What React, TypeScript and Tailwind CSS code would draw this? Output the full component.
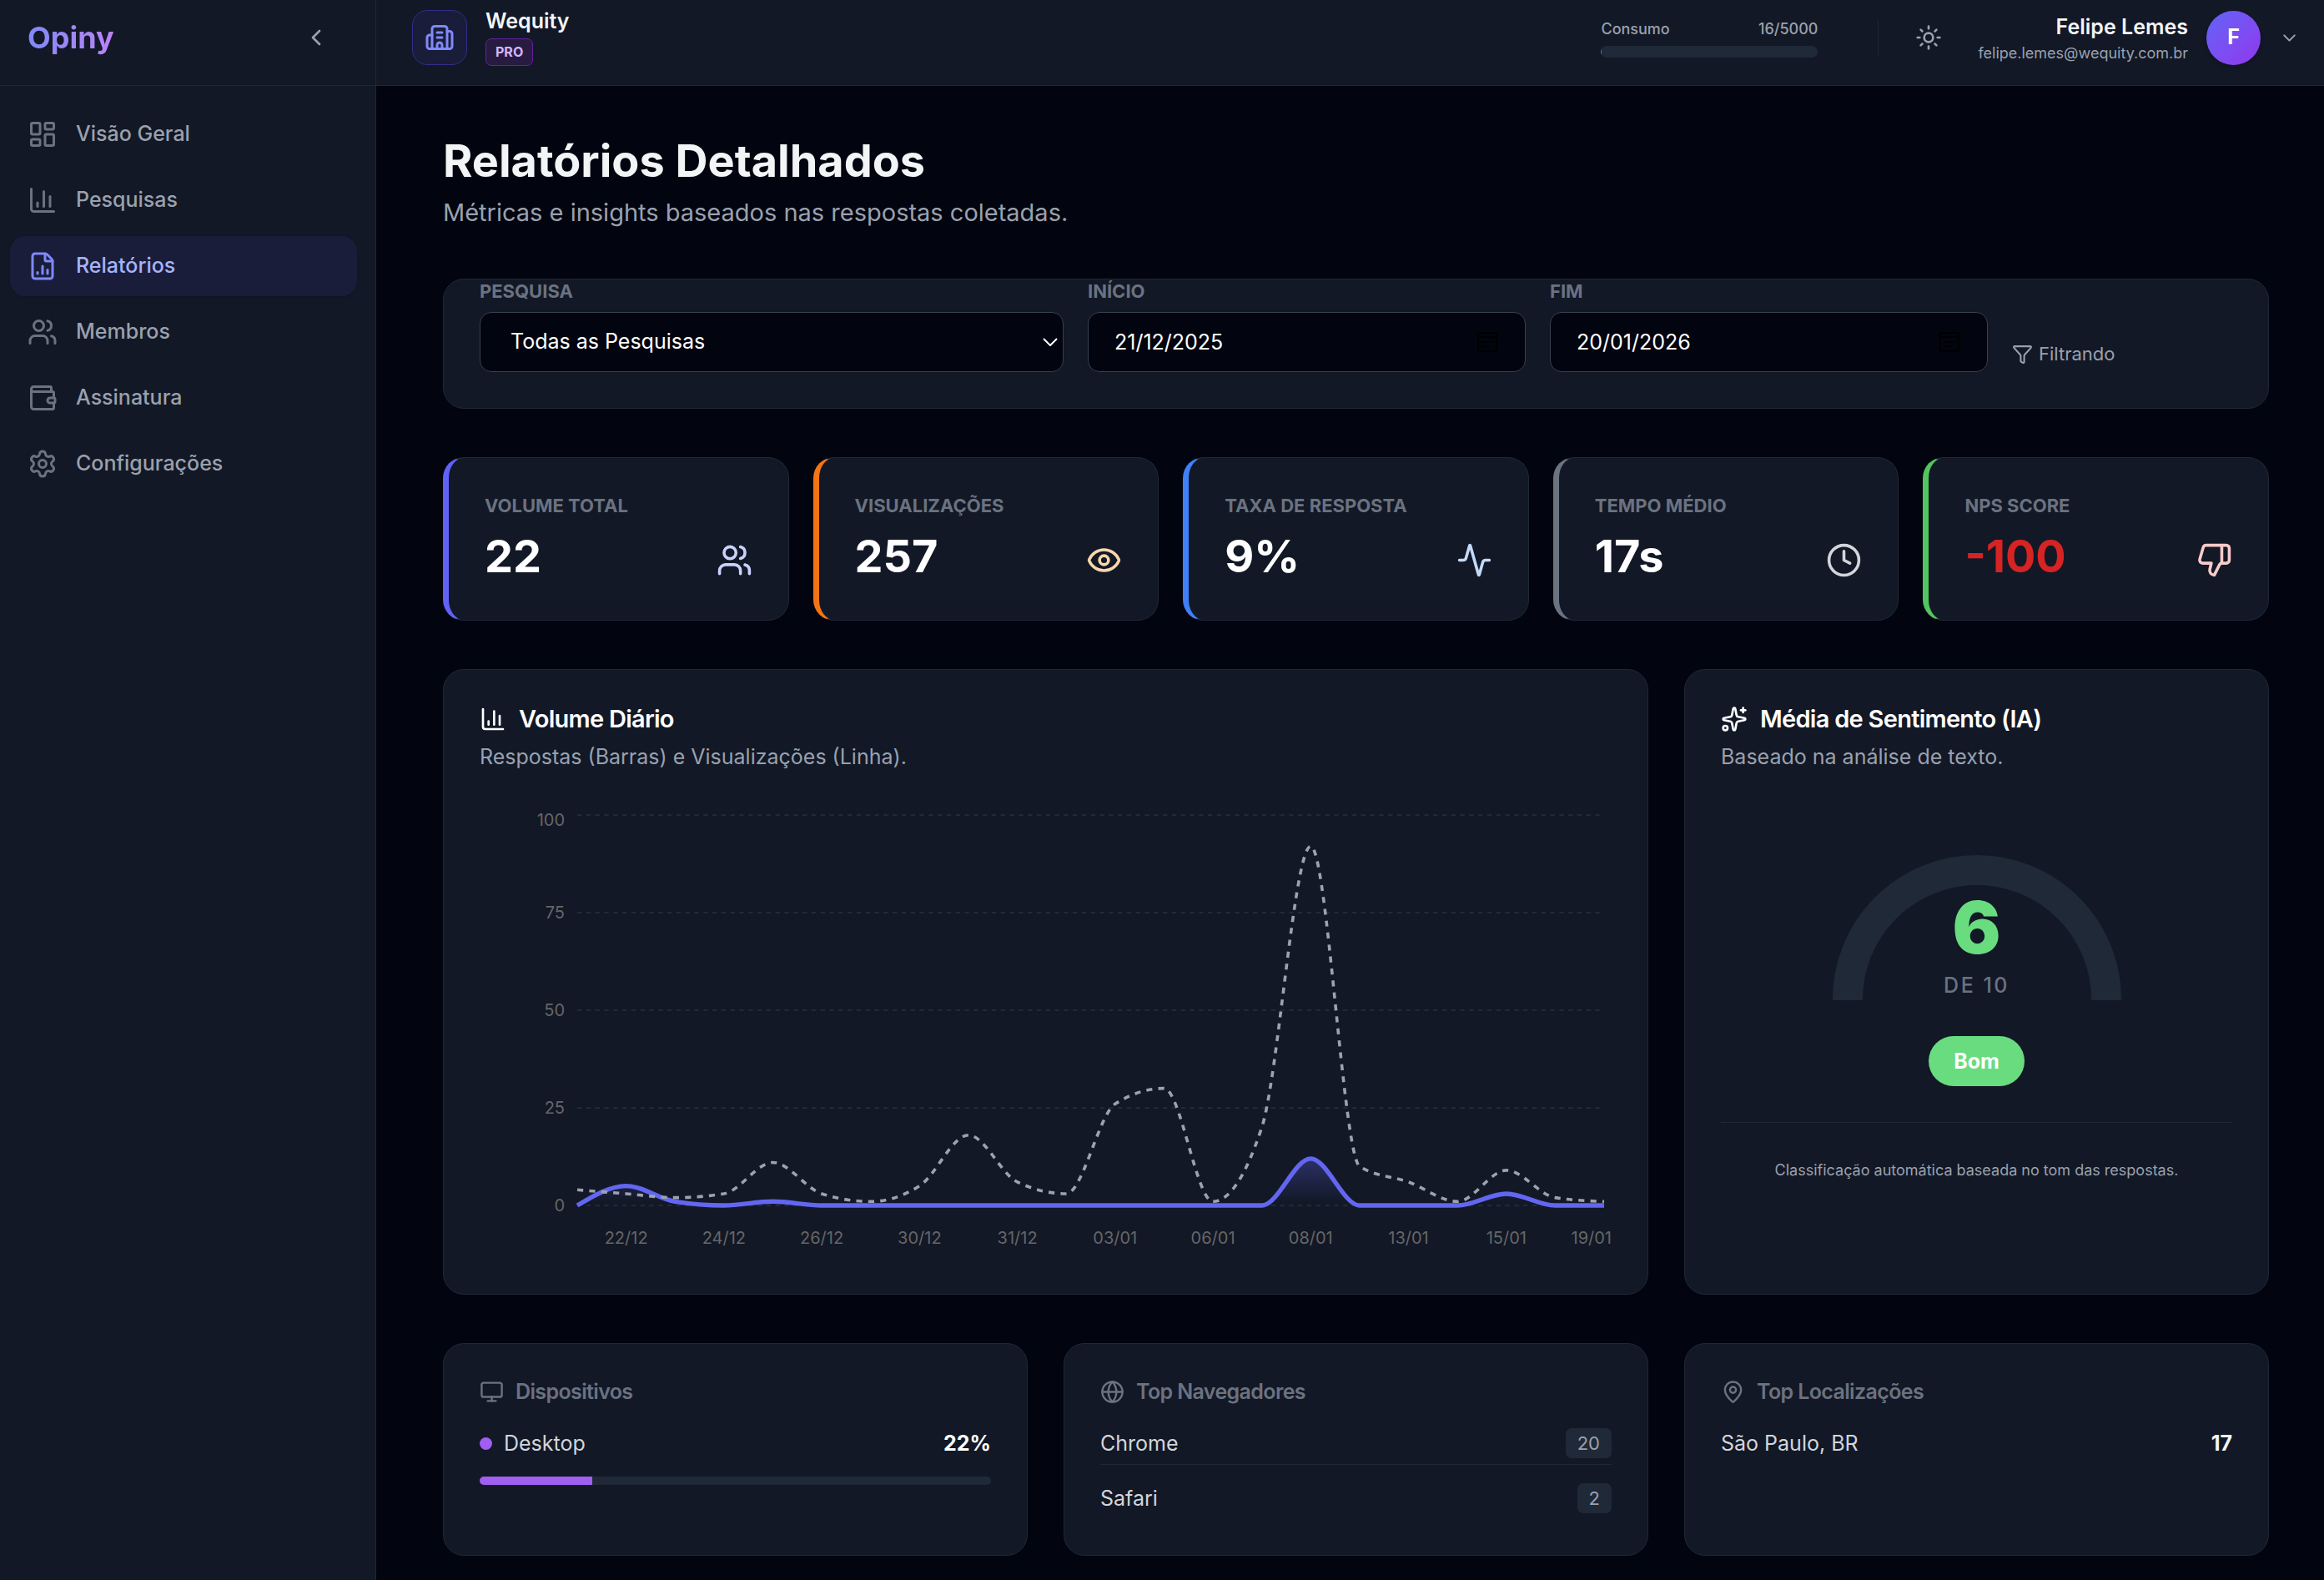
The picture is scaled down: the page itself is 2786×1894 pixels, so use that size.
import type { ReactNode } from "react";
import {
    Activity,
    Building2,
    ChartColumn,
    ChevronDown,
    ChevronLeft,
    Clock,
    Eye,
    FileChartColumn,
    Funnel,
    Globe,
    LayoutDashboard,
    MapPin,
    Monitor,
    Settings,
    Sparkles,
    Sun,
    ThumbsDown,
    Users,
    Wallet,
} from "lucide-react";

const navItems = [
    { label: "Visão Geral", icon: LayoutDashboard },
    { label: "Pesquisas", icon: ChartColumn },
    { label: "Relatórios", icon: FileChartColumn, active: true },
    { label: "Membros", icon: Users },
    { label: "Assinatura", icon: Wallet },
    { label: "Configurações", icon: Settings },
];

const stats = [
    { label: "Volume Total", value: "22", icon: Users, border: "border-l-[#6062f6]", color: "text-[#c8d2fb]", text: "text-white" },
    { label: "Visualizações", value: "257", icon: Eye, border: "border-l-[#f27415]", color: "text-[#f8d7ac]", text: "text-white" },
    { label: "Taxa de Resposta", value: "9%", icon: Activity, border: "border-l-[#3f80f6]", color: "text-[#c3daf9]", text: "text-white" },
    { label: "Tempo Médio", value: "17s", icon: Clock, border: "border-l-[#6b7280]", color: "text-[#d2d5db]", text: "text-white" },
    { label: "NPS Score", value: "-100", icon: ThumbsDown, border: "border-l-[#53c45f]", color: "text-[#f8cbca]", text: "text-[#d62323]" },
];

const views = [4, 3, 2, 3, 11, 3, 1, 5, 18, 6, 3, 26, 30, 1, 20, 92, 10, 6, 1, 9, 2, 1];
const answers = [0, 5, 1, 0, 1, 0, 0, 0, 0, 0, 0, 0, 0, 0, 0, 12, 0, 0, 0, 3, 0, 0];
const dayLabels = ["22/12", "24/12", "26/12", "30/12", "31/12", "03/01", "06/01", "08/01", "13/01", "15/01"];

const PLOT = { left: 117, right: 1348, top: 9, bottom: 477 };

const px = (i: number) => PLOT.left + (i * (PLOT.right - PLOT.left)) / (views.length - 1);
const py = (v: number) => PLOT.bottom - (v * (PLOT.bottom - PLOT.top)) / 100;

// Monotone cubic interpolation, so the line never overshoots its points
function monotonePath(values: number[]) {
    const pts = values.map((v, i) => ({ x: px(i), y: py(v) }));
    const h = pts[1].x - pts[0].x;
    const slopes = pts.slice(1).map((p, i) => (p.y - pts[i].y) / h);
    const tangents = pts.map((_, i) => {
        if (i === 0 || i === pts.length - 1) return 0;
        const a = slopes[i - 1];
        const b = slopes[i];
        return (Math.sign(a) + Math.sign(b)) * Math.min(Math.abs(a), Math.abs(b), 0.25 * Math.abs(a + b));
    });
    tangents[0] = (3 * slopes[0] - tangents[1]) / 2;
    tangents[pts.length - 1] = (3 * slopes[slopes.length - 1] - tangents[pts.length - 2]) / 2;

    let d = `M${pts[0].x},${pts[0].y}`;
    for (let i = 1; i < pts.length; i++) {
        const p = pts[i - 1];
        const q = pts[i];
        d += `C${p.x + h / 3},${p.y + (tangents[i - 1] * h) / 3},${q.x - h / 3},${q.y - (tangents[i] * h) / 3},${q.x},${q.y}`;
    }
    return d;
}

function Card({ className = "", children }: { className?: string; children: ReactNode }) {
    return (
        <section className={`rounded-[25px] border border-[#1f2836] bg-[#121826] ${className}`}>{children}</section>
    );
}

function Sidebar() {
    return (
        <aside className="w-[451px] shrink-0 border-r border-[#1f2836] bg-[#121826]">
            <div className="flex h-[103px] items-center justify-between border-b border-[#1f2836] pb-[12px] pl-[33px] pr-[55px]">
                <span className="bg-linear-to-r from-[#7f89f7] to-[#bb82f8] bg-clip-text text-[36px] font-bold text-transparent">
                    Opiny
                </span>
                <button type="button" aria-label="Recolher menu" className="text-[#9aa1ae]">
                    <ChevronLeft size={32} />
                </button>
            </div>
            <nav className="flex flex-col gap-[7px] pl-[12px] pr-[22px] pt-[22px]">
                {navItems.map(({ label, icon: Icon, active }) => (
                    <a
                        key={label}
                        href="#"
                        className={`flex h-[72px] items-center gap-[22px] rounded-[18px] px-[21px] text-[25px] font-medium ${
                            active ? "bg-[#191d3a] text-[#a7b3f9] shadow-sm" : "text-[#9aa1ae]"
                        }`}
                    >
                        <Icon size={36} className={active ? "text-[#7f89f7]" : "text-[#6b7280]"} />
                        {label}
                    </a>
                ))}
            </nav>
        </aside>
    );
}

function Header() {
    return (
        <header className="flex h-[103px] items-center justify-between border-b border-[#1f2836] bg-[#121826] pb-[12px] pl-[43px] pr-[29px]">
            <div className="flex items-center gap-[22px]">
                <div className="flex size-[66px] items-center justify-center rounded-[18px] border border-[#312f8a] bg-[#191d3a] text-[#7f89f7]">
                    <Building2 size={36} />
                </div>
                <div className="flex flex-col items-start gap-[6px]">
                    <span className="text-[25px] font-semibold leading-[29px] text-[#f3f4f6]">Wequity</span>
                    <span className="rounded-[7px] border border-[#65229f] bg-[#271b42] px-[11px] text-[16px] font-bold leading-[31px] text-[#d5b5fb]">
                        PRO
                    </span>
                </div>
            </div>

            <div className="flex items-center">
                <div className="flex w-[260px] flex-col gap-[7px]">
                    <div className="flex justify-between text-[18px] font-medium leading-[27px] text-[#9aa1ae]">
                        <span>Consumo</span>
                        <span>16/5000</span>
                    </div>
                    <div className="h-[14px] overflow-hidden rounded-full bg-[#202937]">
                        <div className="h-full bg-[#6062f6]" style={{ width: `${(16 / 5000) * 100}%` }} />
                    </div>
                </div>
                <div className="ml-[72px] h-[43px] w-px bg-[#1f2836]" />
                <button type="button" aria-label="Alternar tema" className="ml-[44px] text-[#9aa1ae]">
                    <Sun size={32} />
                </button>
                <button type="button" className="ml-[43px] flex items-center text-right">
                    <span className="flex flex-col">
                        <span className="text-[25px] font-semibold leading-[36px] text-[#f3f4f6]">Felipe Lemes</span>
                        <span className="text-[18px] leading-[27px] text-[#9aa1ae]">felipe.lemes@wequity.com.br</span>
                    </span>
                    <span className="ml-[22px] flex size-[65px] items-center justify-center rounded-full bg-linear-to-br from-[#6062f6] to-[#8f35ee] text-[25px] font-bold text-white shadow-md">
                        F
                    </span>
                    <ChevronDown size={25} className="ml-[22px] text-[#9aa1ae]" />
                </button>
            </div>
        </header>
    );
}

const fieldLabel = "text-[22px] font-bold uppercase leading-[29px] text-[#6b7280]";
const fieldBox =
    "h-[72px] w-full rounded-[14px] border border-[#374050] bg-[#02040f] text-[25px] text-white outline-none";

function DateField({ id, label, value }: { id: string; label: string; value: string }) {
    return (
        <div className="flex min-w-0 flex-3 flex-col gap-[10px]">
            <label htmlFor={id} className={fieldLabel}>
                {label}
            </label>
            <div className="relative">
                <input id={id} type="text" defaultValue={value} className={`${fieldBox} px-[31px]`} />
                <svg
                    viewBox="0 0 24 24"
                    fill="none"
                    stroke="#000"
                    strokeWidth="2"
                    className="pointer-events-none absolute right-[34px] top-[24px] size-[24px]"
                >
                    <rect x="1" y="1" width="22" height="22" rx="2" />
                    <path d="M1 6h22M6 12h3M11 12h3M16 12h3M6 17h3M11 17h3" />
                </svg>
            </div>
        </div>
    );
}

function Filters() {
    return (
        <Card className="mt-[58px] flex items-end gap-[29px] px-[43px] pb-[43px]">
            <div className="flex min-w-0 flex-4 flex-col gap-[10px]">
                <label htmlFor="survey" className={fieldLabel}>
                    Pesquisa
                </label>
                <div className="relative">
                    <select id="survey" className={`${fieldBox} appearance-none px-[36px]`}>
                        <option>Todas as Pesquisas</option>
                    </select>
                    <svg
                        viewBox="0 0 18 10"
                        fill="none"
                        stroke="#fff"
                        strokeWidth="2"
                        className="pointer-events-none absolute right-[7px] top-[31px] h-[10px] w-[18px]"
                    >
                        <path d="M1 1l8 8 8-8" />
                    </svg>
                </div>
            </div>
            <DateField id="start" label="Início" value="21/12/2025" />
            <DateField id="end" label="Fim" value="20/01/2026" />
            <div className="flex h-[43px] w-[264px] items-center gap-[7px] text-[22px] text-[#9aa1ae]">
                <Funnel size={25} />
                Filtrando
            </div>
        </Card>
    );
}

function VolumeChart() {
    const line = monotonePath(answers);

    return (
        <svg viewBox="0 0 1357 540" className="w-full" role="img" aria-label="Volume Diário">
            <defs>
                <linearGradient id="answersFill" x1="0" y1="0" x2="0" y2="1">
                    <stop offset="5%" stopColor="#6366f1" stopOpacity="0.3" />
                    <stop offset="95%" stopColor="#6366f1" stopOpacity="0" />
                </linearGradient>
            </defs>
            {[0, 25, 50, 75, 100].map((v) => (
                <g key={v}>
                    <line
                        x1={PLOT.left}
                        x2={PLOT.right}
                        y1={py(v)}
                        y2={py(v)}
                        stroke="#222938"
                        strokeWidth="2"
                        strokeDasharray="5.4 5.4"
                    />
                    <text x={102} y={py(v) + (v === 100 ? 13 : 7)} textAnchor="end" fill="#666" fontSize="20">
                        {v}
                    </text>
                </g>
            ))}
            {dayLabels.map((label, i) => (
                <text key={label} x={px(i * 2 + 1)} y={523} textAnchor="middle" fill="#666" fontSize="20">
                    {label}
                </text>
            ))}
            <text x={1357} y={523} textAnchor="end" fill="#666" fontSize="20">
                19/01
            </text>
            <path d={`${line}L${PLOT.right},${PLOT.bottom}L${PLOT.left},${PLOT.bottom}Z`} fill="url(#answersFill)" />
            <path d={line} fill="none" stroke="#6366f1" strokeWidth="5.4" />
            <path d={monotonePath(views)} fill="none" stroke="#9ca3af" strokeWidth="3.6" strokeDasharray="7.2 7.2" />
        </svg>
    );
}

function ChartHeading({ icon, title, subtitle }: { icon: ReactNode; title: string; subtitle: string }) {
    return (
        <div>
            <h2 className="flex items-center gap-[15px] text-[29px] font-semibold leading-[32px] tracking-tight text-white">
                {icon}
                {title}
            </h2>
            <p className="mt-[11px] text-[25px] leading-[36px] text-[#9aa1ae]">{subtitle}</p>
        </div>
    );
}

function Sentiment() {
    return (
        <Card className="p-[43px]">
            <ChartHeading icon={<Sparkles size={32} />} title="Média de Sentimento (IA)" subtitle="Baseado na análise de texto." />
            <div className="mt-[100px] flex flex-col items-center">
                <div className="relative w-[346px]">
                    <svg viewBox="0 0 346 174" className="w-full">
                        <path d="M18 174v-1a155 155 0 0 1 310 0v1" fill="none" stroke="#202937" strokeWidth="36" />
                    </svg>
                    <div className="absolute inset-x-0 bottom-0 flex flex-col items-center gap-[8px]">
                        <span className="text-[86px] font-black leading-[86px] text-[#68dc7f]">6</span>
                        <span className="text-[25px] font-medium uppercase leading-[36px] tracking-widest text-[#6b7280]">
                            de 10
                        </span>
                    </div>
                </div>
                <span className="mt-[43px] rounded-full bg-[#68dc7f] px-[30px] text-[25px] font-bold leading-[60px] text-white">
                    Bom
                </span>
            </div>
            <p className="mt-[43px] border-t border-[#1f2836] pt-[43px] text-center text-[18px] leading-[27px] text-[#9aa1ae]">
                Classificação automática baseada no tom das respostas.
            </p>
        </Card>
    );
}

function ListCard({ icon, title, children }: { icon: ReactNode; title: string; children: ReactNode }) {
    return (
        <Card className="p-[43px] pb-[50px] text-[25px]">
            <h2 className="mb-[29px] flex items-center gap-[14px] font-semibold leading-[29px] tracking-tight text-[#6b7280]">
                {icon}
                {title}
            </h2>
            {children}
        </Card>
    );
}

function BrowserRow({ name, count }: { name: string; count: number }) {
    return (
        <li className="flex items-center justify-between border-[#1f2836] leading-[36px] not-last:mb-[22px] not-last:border-b not-last:pb-[7px]">
            <span className="text-[#d2d5db]">{name}</span>
            <span className="rounded-[7px] bg-[#202937] px-[14px] text-[22px] text-[#9aa1ae]">{count}</span>
        </li>
    );
}

export default function App() {
    return (
        <div className="flex min-h-screen bg-[#02040f] font-[Inter,sans-serif]">
            <Sidebar />
            <div className="min-w-0 flex-1">
                <Header />
                <main className="pb-[29px] pl-[80px] pr-[66px] pt-[57px]">
                    <h1 className="text-[54px] font-bold leading-[65px] text-[#f3f4f6]">Relatórios Detalhados</h1>
                    <p className="mt-[8px] text-[29px] leading-[43px] text-[#9aa1ae]">
                        Métricas e insights baseados nas respostas coletadas.
                    </p>

                    <Filters />

                    <div className="mt-[58px] grid grid-cols-5 gap-[29px]">
                        {stats.map(({ label, value, icon: Icon, border, color, text }) => (
                            <Card key={label} className={`border-l-[7px] p-[43px] ${border}`}>
                                <p className="text-[22px] font-bold uppercase leading-[29px] text-[#6b7280]">{label}</p>
                                <div className="mt-[12px] flex items-end justify-between">
                                    <span className={`text-[54px] font-bold leading-[67px] ${text}`}>{value}</span>
                                    <Icon size={43} className={`mb-[7px] ${color}`} />
                                </div>
                            </Card>
                        ))}
                    </div>

                    <div className="mt-[58px] grid grid-cols-3 gap-[43px]">
                        <Card className="col-span-2 flex flex-col gap-[43px] p-[43px]">
                            <ChartHeading
                                icon={<ChartColumn size={32} />}
                                title="Volume Diário"
                                subtitle="Respostas (Barras) e Visualizações (Linha)."
                            />
                            <VolumeChart />
                        </Card>
                        <Sentiment />
                    </div>

                    <div className="mt-[58px] grid grid-cols-3 gap-[43px]">
                        <ListCard icon={<Monitor size={29} />} title="Dispositivos">
                            <div className="flex items-center gap-[14px] leading-[36px]">
                                <span className="size-[15px] rounded-full bg-[#a05ff0]" />
                                <span className="text-[#d2d5db]">Desktop</span>
                                <span className="ml-auto font-bold text-white">22%</span>
                            </div>
                            <div className="mt-[22px] h-[10px] overflow-hidden rounded-full bg-[#202937]">
                                <div className="h-full bg-[#a05ff0]" style={{ width: "22%" }} />
                            </div>
                        </ListCard>
                        <ListCard icon={<Globe size={29} />} title="Top Navegadores">
                            <ul>
                                <BrowserRow name="Chrome" count={20} />
                                <BrowserRow name="Safari" count={2} />
                            </ul>
                        </ListCard>
                        <ListCard icon={<MapPin size={29} />} title="Top Localizações">
                            <div className="flex items-center justify-between leading-[36px]">
                                <span className="text-[#d2d5db]">São Paulo, BR</span>
                                <span className="font-bold text-[#f3f4f6]">17</span>
                            </div>
                        </ListCard>
                    </div>
                </main>
            </div>
        </div>
    );
}
